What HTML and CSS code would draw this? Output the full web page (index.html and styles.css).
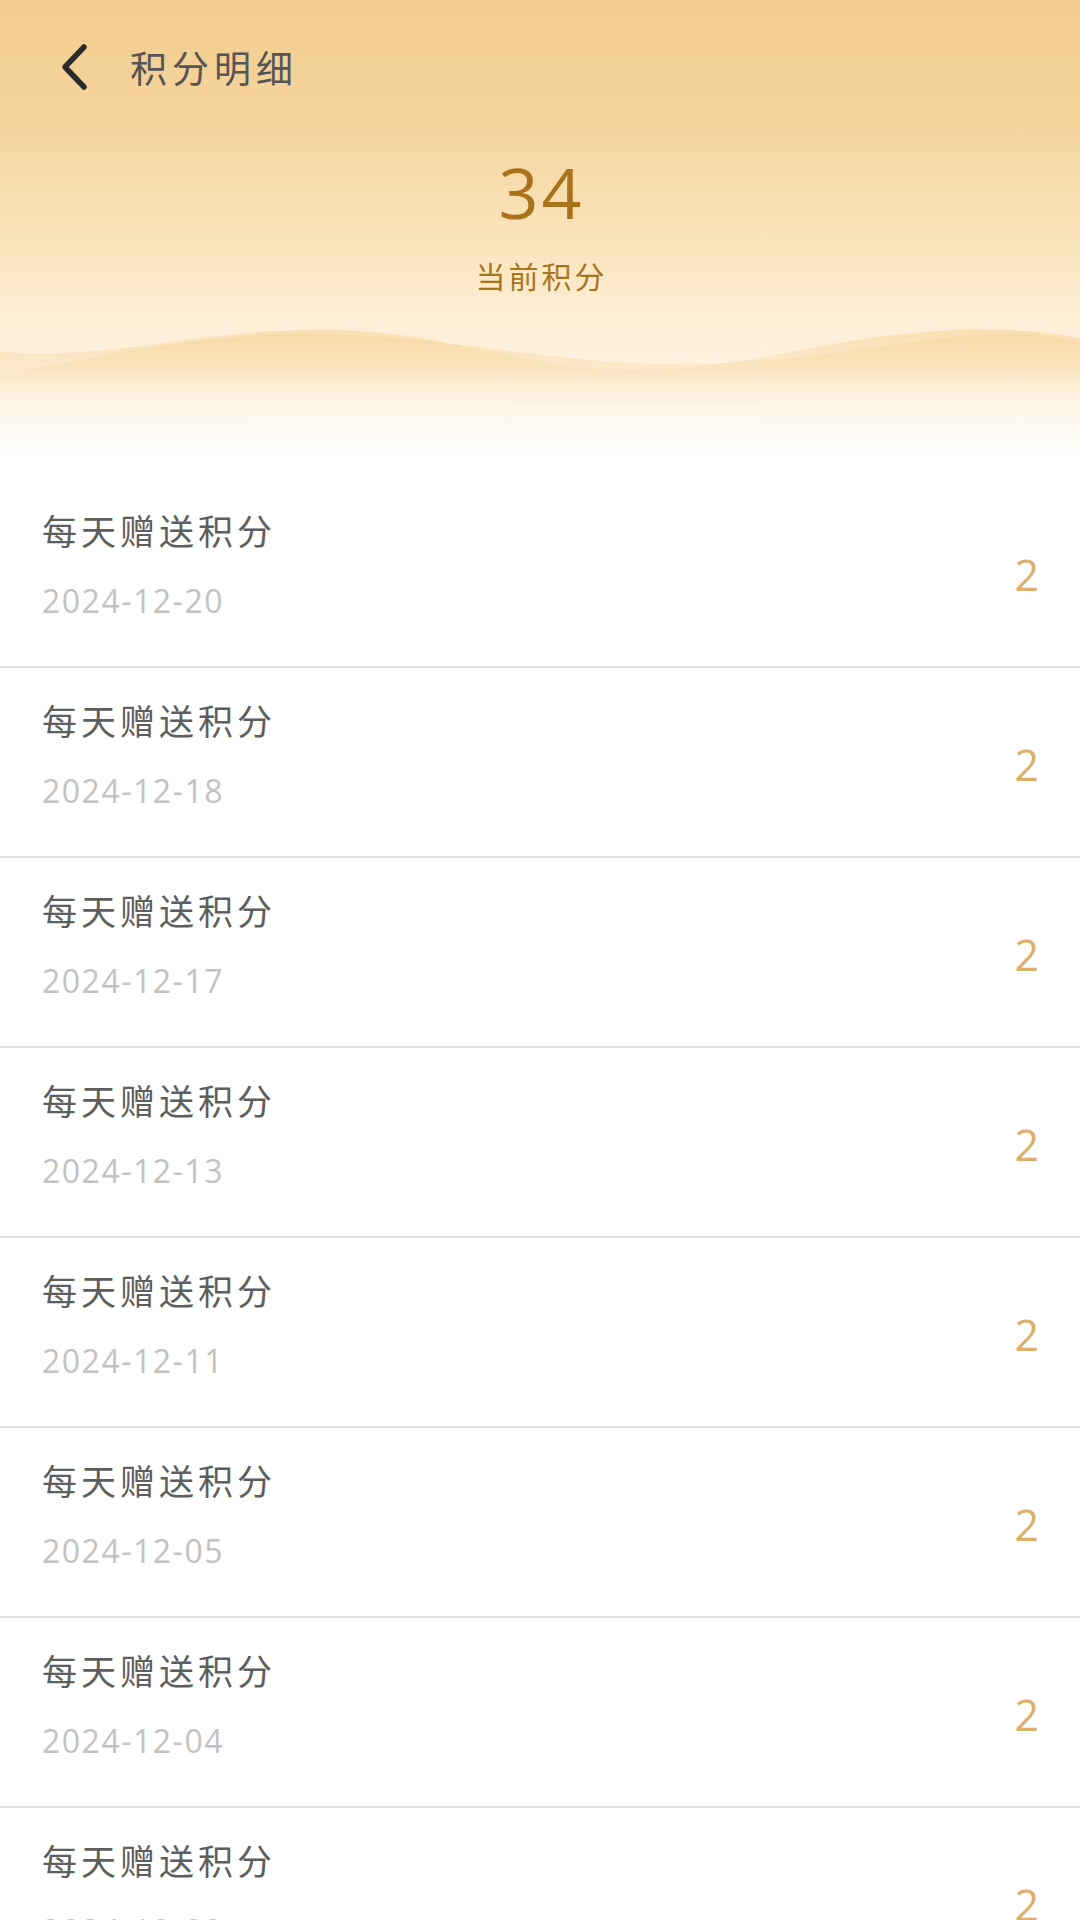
FILE: index.html
```html
<!DOCTYPE html>
<html lang="zh-CN">
<head>
    <meta charset="UTF-8">
    <meta name="viewport" content="width=device-width, initial-scale=1.0">
    <title>积分明细</title>
    <link rel="stylesheet" href="styles.css">
</head>
<body>
    <div class="hero">
        <div class="topbar">
            <a href="#" class="back">
                <svg width="32" height="48" viewBox="0 0 32 48">
                    <polyline points="26,4 7,24 26,44" fill="none" stroke="#2b2b2b" stroke-width="5.5" stroke-linecap="round" stroke-linejoin="round"/>
                </svg>
            </a>
            <h1 class="title">积分明细</h1>
        </div>

        <div class="score">34</div>
        <div class="score-label">当前积分</div>

        <!-- 波浪背景 -->
        <svg class="waves" viewBox="0 0 1080 188" preserveAspectRatio="none">
            <defs>
                <linearGradient id="waveFill" x1="0" y1="0" x2="0" y2="1">
                    <stop offset="0" stop-color="#f6d49a" stop-opacity="0.6"/>
                    <stop offset="0.45" stop-color="#fbe6c2" stop-opacity="0.3"/>
                    <stop offset="1" stop-color="#ffffff" stop-opacity="0"/>
                </linearGradient>
                <linearGradient id="fadeWhite" x1="0" y1="0" x2="0" y2="1">
                    <stop offset="0" stop-color="#ffffff" stop-opacity="0"/>
                    <stop offset="1" stop-color="#ffffff" stop-opacity="1"/>
                </linearGradient>
            </defs>
            <path d="M0,62 C120,70 200,38 330,40 C460,42 520,82 640,80 C760,78 820,46 960,40 C1020,38 1060,44 1080,48 L1080,188 L0,188 Z" fill="url(#waveFill)"/>
            <path d="M0,84 C80,72 180,46 300,44 C440,42 560,78 700,74 C840,70 920,44 1010,44 C1050,44 1070,50 1080,52 L1080,188 L0,188 Z" fill="url(#waveFill)"/>
            <rect x="0" y="76" width="1080" height="112" fill="url(#fadeWhite)"/>
        </svg>
    </div>

    <ul class="record-list">
        <li class="record">
            <div class="record-info">
                <div class="record-name">每天赠送积分</div>
                <div class="record-date">2024-12-20</div>
            </div>
            <div class="record-points">2</div>
        </li>
        <li class="record">
            <div class="record-info">
                <div class="record-name">每天赠送积分</div>
                <div class="record-date">2024-12-18</div>
            </div>
            <div class="record-points">2</div>
        </li>
        <li class="record">
            <div class="record-info">
                <div class="record-name">每天赠送积分</div>
                <div class="record-date">2024-12-17</div>
            </div>
            <div class="record-points">2</div>
        </li>
        <li class="record">
            <div class="record-info">
                <div class="record-name">每天赠送积分</div>
                <div class="record-date">2024-12-13</div>
            </div>
            <div class="record-points">2</div>
        </li>
        <li class="record">
            <div class="record-info">
                <div class="record-name">每天赠送积分</div>
                <div class="record-date">2024-12-11</div>
            </div>
            <div class="record-points">2</div>
        </li>
        <li class="record">
            <div class="record-info">
                <div class="record-name">每天赠送积分</div>
                <div class="record-date">2024-12-05</div>
            </div>
            <div class="record-points">2</div>
        </li>
        <li class="record">
            <div class="record-info">
                <div class="record-name">每天赠送积分</div>
                <div class="record-date">2024-12-04</div>
            </div>
            <div class="record-points">2</div>
        </li>
        <li class="record">
            <div class="record-info">
                <div class="record-name">每天赠送积分</div>
                <div class="record-date">2024-12-03</div>
            </div>
            <div class="record-points">2</div>
        </li>
    </ul>
</body>
</html>
```

FILE: styles.css
```css
* {
    margin: 0;
    padding: 0;
    box-sizing: border-box;
}

body {
    background: #fff;
    font-family: 'Noto Sans CJK SC', 'Noto Sans', sans-serif;
    overflow: hidden;
}

.hero {
    background: linear-gradient(180deg, #f2cc8c 0px, #f5d59f 130px, #fae5bf 250px, #fdefd8 330px, #fef6ea 420px, #ffffff 477px);
}

.topbar {
    height: 134px;
    display: flex;
    align-items: center;
    padding-left: 58px;
}

.back {
    display: flex;
    width: 32px;
    height: 48px;
}

.title {
    margin-left: 40px;
    font-size: 37px;
    font-weight: 400;
    letter-spacing: 5px;
    color: #555;
    line-height: 1;
}

.score {
    margin-top: 23px;
    font-family: 'Open Sans', sans-serif;
    font-size: 70px;
    line-height: 70px;
    letter-spacing: 3px;
    padding-left: 3px;
    text-align: center;
    color: #a9731b;
}

.score-label {
    margin-top: 33px;
    font-size: 30px;
    line-height: 30px;
    letter-spacing: 3px;
    padding-left: 3px;
    text-align: center;
    color: #a8761f;
}

.waves {
    display: block;
    width: 100%;
    height: 188px;
}

.record-list {
    list-style: none;
}

.record {
    height: 190px;
    border-bottom: 2px solid #e0e0e0;
    display: flex;
    justify-content: space-between;
    padding: 30px 41px 0 42px;
}

.record-name {
    font-size: 35px;
    line-height: 44px;
    letter-spacing: 4px;
    color: #5e5e5e;
}

.record-date {
    margin-top: 29px;
    font-family: 'Open Sans', sans-serif;
    font-size: 32px;
    line-height: 40px;
    letter-spacing: 1.5px;
    color: #c2c2c2;
}

.record-points {
    margin-top: 42px;
    font-family: 'Open Sans', sans-serif;
    font-size: 43px;
    line-height: 50px;
    color: #dcb06a;
}
```
